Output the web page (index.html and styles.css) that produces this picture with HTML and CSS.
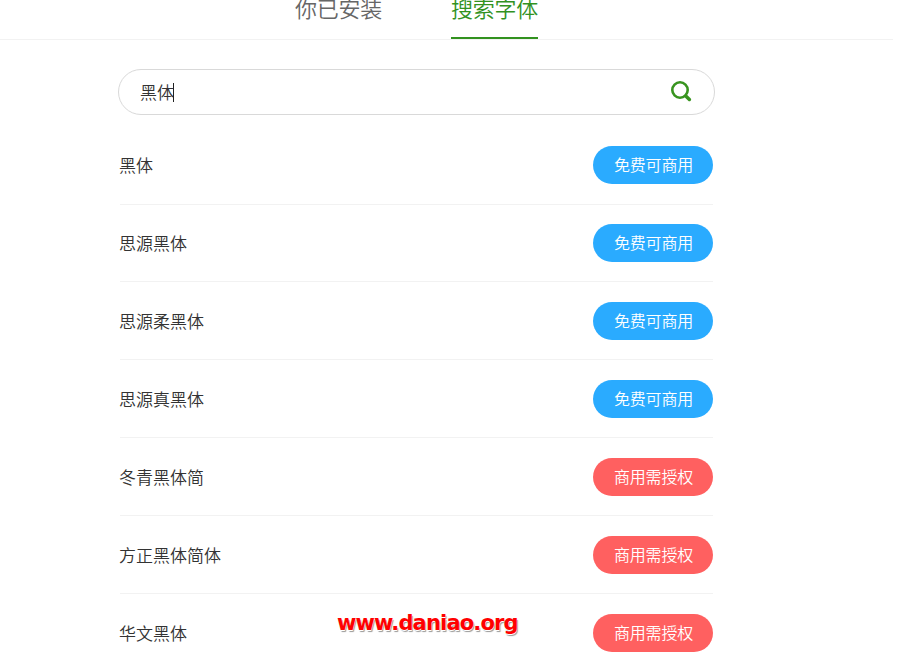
FILE: index.html
```html
<!DOCTYPE html>
<html lang="zh-CN">
<head>
<meta charset="utf-8">
<title>搜索字体</title>
<link rel="stylesheet" href="styles.css">
</head>
<body>
<nav class="tabs">
  <a class="tab">你已安装</a>
  <a class="tab active">搜索字体</a>
</nav>
<main class="content">
  <div class="search">
    <span class="query">黑体</span><span class="caret"></span>
    <svg class="search-icon" width="22" height="22" viewBox="0 0 22 22" fill="none" stroke="#38941f">
      <circle cx="10" cy="9" r="7.7" stroke-width="2.6"/>
      <path d="M15.8 15L19.4 18.5" stroke-width="3.5" stroke-linecap="round"/>
    </svg>
  </div>
  <ul class="fonts">
    <li class="row first"><span class="name">黑体</span><span class="badge free">免费可商用</span></li>
    <li class="row second"><span class="name">思源黑体</span><span class="badge free">免费可商用</span></li>
    <li class="row"><span class="name">思源柔黑体</span><span class="badge free">免费可商用</span></li>
    <li class="row"><span class="name">思源真黑体</span><span class="badge free">免费可商用</span></li>
    <li class="row"><span class="name">冬青黑体简</span><span class="badge paid">商用需授权</span></li>
    <li class="row"><span class="name">方正黑体简体</span><span class="badge paid">商用需授权</span></li>
    <li class="row"><span class="name">华文黑体</span><span class="badge paid">商用需授权</span></li>
  </ul>
</main>
<div class="watermark">www.daniao.org</div>
</body>
</html>
```
FILE: styles.css
```css
* { box-sizing: border-box; }
body {
  margin: 0;
  height: 661px;
  overflow: hidden;
  position: relative;
  background: #fff;
  color: #333;
  font-family: "Noto Sans CJK SC", sans-serif;
  font-weight: 350;
}
.tabs {
  display: flex;
  gap: 69px;
  width: 893px;
  height: 40px;
  padding-left: 295px;
  border-bottom: 1px solid #f2f2f2;
}
.tab {
  width: 87px;
  height: 39px;
  font-size: 22px;
  line-height: 15px;
  letter-spacing: -0.25px;
  white-space: nowrap;
  color: #666;
}
.tab.active {
  color: #32921f;
  border-bottom: 2px solid #32921f;
}
.content {
  width: 597px;
  margin: 29px 0 0 118px;
}
.search {
  display: flex;
  align-items: center;
  height: 46px;
  padding: 0 22px 0 21px;
  border: 1px solid #d9d9d9;
  border-radius: 23px;
}
.query { font-size: 17px; line-height: 24px; }
.caret { width: 1px; height: 19px; margin-left: -1px; background: #222; }
.search-icon { margin-left: auto; }
.fonts {
  list-style: none;
  width: 594px;
  margin: 11px 0 0 1px;
  padding: 0;
}
.row {
  display: flex;
  justify-content: space-between;
  align-items: flex-start;
  height: 78px;
  padding-top: 20px;
  background: linear-gradient(#f2f2f2, #f2f2f2) 1px 100% / 593px 1px no-repeat;
}
.row.first { height: 79px; }
.row.second { height: 77px; padding-top: 19px; }
.name { font-size: 17px; line-height: 38px; }
.badge {
  width: 120px;
  height: 38px;
  border-radius: 19px;
  padding-left: 21px;
  font-size: 16px;
  line-height: 36px;
  letter-spacing: -0.2px;
  white-space: nowrap;
  color: #fff;
}
.free { background: #2aabff; }
.paid { background: #ff6060; }
.watermark {
  position: absolute;
  left: 337px;
  top: 609px;
  font: bold 21px/28px "DejaVu Sans", sans-serif;
  letter-spacing: -0.85px;
  color: #f00;
  text-shadow: 0 1px 0 #fff, 1px 2px 1px #999;
}
```
